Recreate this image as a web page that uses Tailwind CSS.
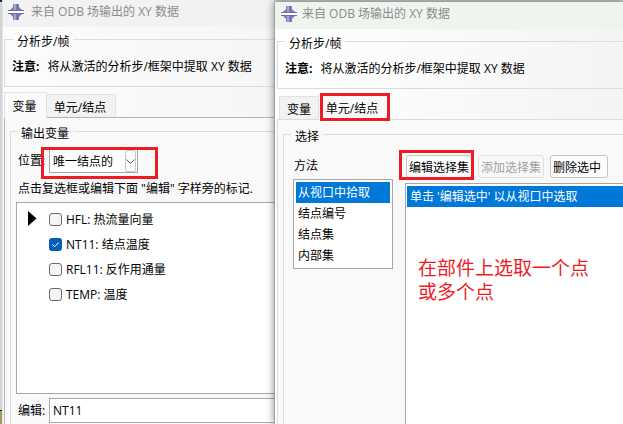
<!DOCTYPE html>
<html lang="zh-CN">

<head>
  <meta charset="UTF-8">
  <meta name="viewport" content="width=device-width, initial-scale=1.0">
  <title>来自 ODB 场输出的 XY 数据</title>
  <script src="https://cdn.jsdelivr.net/npm/@tailwindcss/browser@4"></script>
</head>

<body class="flex h-screen overflow-hidden bg-[#d4d4d6] font-['Open_Sans','Noto_Sans_CJK_SC',sans-serif] text-[12px] leading-4 text-black">

  <!-- Edge of the application behind the windows -->
  <div class="flex w-[2px] shrink-0 flex-col justify-between">
    <span class="h-[2px] bg-[#0d3d12]"></span>
    <span class="h-[14px] border-t border-[#222] bg-[#a39a62]"></span>
  </div>

  <!-- Left window: variables tab -->
  <section class="flex w-[272px] shrink-0 flex-col border-l border-[#e4e4e4] bg-linear-to-r from-[#fcfcfc] to-[#f6f6f6]">
    <header class="flex h-[27px] shrink-0 items-center gap-[7px] bg-[#f2f2f2] pb-[3px] pl-[5px] text-[#8c8c8c]">
      <svg class="size-4 shrink-0" viewBox="0 0 16 16">
        <path d="M5 0h6v3l4 4H1l4-4zM1 9h14l-4 4v3H5v-3L1 9z" fill="#8080b4" />
        <path d="M6 0h2v7H6zM6 9h2v7H6z" fill="#a4a4cc" />
        <path d="M9 0h1v7H9zM9 9h1v7H9z" fill="#6a6aa4" />
        <path d="M0 6h16v1H0zM0 9h16v1H0z" fill="#6c6ca8" />
        <path d="M0 7h16v2H0z" fill="#fff" />
      </svg>
      <h1>来自 ODB 场输出的 XY 数据</h1>
    </header>

    <fieldset class="ml-px mt-px border border-r-0 border-[#dcdcdc] pb-[11px] pl-[7px] pt-[9px]">
      <legend class="ml-px px-1 pt-[6px]">分析步/帧</legend>
      <p class="whitespace-nowrap"><b class="mr-2">注意:</b>将从激活的分析步/框架中提取 XY 数据</p>
    </fieldset>

    <div class="ml-px mt-[5px] flex items-end">
      <button class="h-[26px] w-[43px] border border-b-0 border-[#e2e2e2] bg-[#fafafa] pr-[2px] pt-[3px]">变量</button>
      <div class="flex h-6 flex-1 border-b border-[#b4b4c0]">
        <button class="w-[69px] border border-b-0 border-l-0 border-[#e2e2e2] bg-[#f2f2f2] pr-[2px] pt-[3px]">单元/结点</button>
      </div>
    </div>

    <div class="ml-px flex flex-1 flex-col border-l border-[#b4b4b8] bg-[#f9f9f9] pl-[5px] pt-[2px]">
      <fieldset class="flex flex-1 flex-col border border-b-0 border-r-0 border-[#dcdcdc] pb-px pl-[5px]">
        <legend class="ml-px px-1 pt-[6px]">输出变量</legend>
        <div class="mt-[7px] flex items-center pl-[2px]">
          <label for="position" class="w-[31px]">位置:</label>
          <div class="relative">
            <select id="position" class="h-6 w-[89px] appearance-none border border-[#a6a6ac] bg-white pl-[3px] pt-px">
              <option>唯一结点的</option>
            </select>
            <span class="pointer-events-none absolute inset-y-px right-[2px] flex w-[11px] items-center justify-center rounded-xs border border-[#c8c8c8] bg-[#fbfbfb]">
              <svg class="h-[5px] w-[9px] shrink-0" viewBox="0 0 9 5"><path d="M.5.5l4 4 4-4" fill="none" stroke="#555" /></svg>
            </span>
            <span class="pointer-events-none absolute -bottom-[6px] -left-2 -right-5 -top-[2px] border-3 border-[#ed1c24]"></span>
          </div>
        </div>
        <p class="mt-2 whitespace-nowrap pl-[2px]">点击复选框或编辑下面 "编辑" 字样旁的标记.</p>

        <div class="mt-[5px] flex flex-1 gap-3 border border-r-0 border-[#a6a6ac] bg-white pl-[11px] pt-1">
          <svg class="mt-1 h-[15px] w-[9px]" viewBox="0 0 9 15"><path d="M0 0l8.5 7.5L0 15z" /></svg>
          <ul>
            <li><label class="flex h-[25px] items-center gap-1"><input type="checkbox" class="size-[13px] appearance-none rounded-[3px] border border-[#6b6b6b] bg-[#f5f5f5]">HFL: 热流量向量</label></li>
            <li><label class="flex h-[25px] items-center gap-1">
                <span class="relative flex">
                  <input type="checkbox" checked class="size-[13px] appearance-none rounded-[3px] bg-[#005fb8]">
                  <svg class="pointer-events-none absolute inset-0 size-[13px]" viewBox="0 0 13 13"><path d="M3.5 6.5l2.2 2.2L9.7 4.5" fill="none" stroke="#fff" /></svg>
                </span>NT11: 结点温度</label></li>
            <li><label class="flex h-[25px] items-center gap-1"><input type="checkbox" class="size-[13px] appearance-none rounded-[3px] border border-[#6b6b6b] bg-[#f5f5f5]">RFL11: 反作用通量</label></li>
            <li><label class="flex h-[25px] items-center gap-1"><input type="checkbox" class="size-[13px] appearance-none rounded-[3px] border border-[#6b6b6b] bg-[#f5f5f5]">TEMP: 温度</label></li>
          </ul>
        </div>

        <div class="mt-1 flex items-center pl-[2px]">
          <label for="edit" class="w-[31px] shrink-0">编辑:</label>
          <input id="edit" value="NT11" class="h-[25px] min-w-0 flex-1 border border-r-0 border-[#a6a6ac] bg-white px-[3px]">
        </div>
      </fieldset>
    </div>
  </section>

  <!-- Right window: element/node tab -->
  <section class="relative ml-px mt-[2px] flex min-w-0 flex-1 flex-col bg-linear-to-r from-white to-[#f4f4f4] shadow-[0_0_8px_1px_rgba(0,0,0,0.45)]">
    <header class="flex h-[27px] shrink-0 items-center gap-[5px] bg-[#eff4ee] pb-[3px] pl-[6px] text-[#8c8c8c]">
      <svg class="size-4 shrink-0" viewBox="0 0 16 16">
        <path d="M5 0h6v3l4 4H1l4-4zM1 9h14l-4 4v3H5v-3L1 9z" fill="#8080b4" />
        <path d="M6 0h2v7H6zM6 9h2v7H6z" fill="#a4a4cc" />
        <path d="M9 0h1v7H9zM9 9h1v7H9z" fill="#6a6aa4" />
        <path d="M0 6h16v1H0zM0 9h16v1H0z" fill="#6c6ca8" />
        <path d="M0 7h16v2H0z" fill="#fff" />
      </svg>
      <h1>来自 ODB 场输出的 XY 数据</h1>
    </header>

    <fieldset class="ml-[2px] mt-px border border-r-0 border-[#dcdcdc] pb-[11px] pl-[7px] pt-[9px]">
      <legend class="px-1 pt-[6px]">分析步/帧</legend>
      <p class="whitespace-nowrap"><b class="mr-2">注意:</b>将从激活的分析步/框架中提取 XY 数据</p>
    </fieldset>

    <div class="ml-[2px] mt-[5px] flex items-end">
      <div class="flex h-6 border-b border-[#dcdcdc] pl-[2px]">
        <button class="w-[39px] border border-b-0 border-r-0 border-[#e2e2e2] bg-[#f2f2f2] pt-[3px]">变量</button>
      </div>
      <button class="relative h-[26px] w-[71px] border border-b-0 border-[#e2e2e2] bg-[#fafafa] pr-[3px] pt-[3px]">
        单元/结点
        <span class="pointer-events-none absolute -bottom-px -right-[2px] -top-[2px] left-px border-3 border-[#ed1c24]"></span>
      </button>
      <div class="h-px flex-1 bg-[#dcdcdc]"></div>
    </div>

    <div class="ml-[2px] flex flex-1 flex-col border-l border-[#dcdcdc] bg-[#f9f9f9] pl-[5px] pt-[3px]">
      <fieldset class="flex flex-1 gap-3 border border-b-0 border-r-0 border-[#dcdcdc] pl-[9px]">
        <legend class="-ml-[2px] px-1 pt-[6px]">选择</legend>
        <div class="w-[100px] shrink-0 pt-[13px]">
          <h2 class="pl-px">方法</h2>
          <ul class="mt-[5px] border border-[#a6a6ac] bg-white p-[2px] leading-[21px]">
            <li><button class="block w-full bg-[#0078d7] pl-[2px] text-left text-white">从视口中拾取</button></li>
            <li><button class="block w-full pl-[2px] text-left">结点编号</button></li>
            <li><button class="block w-full pl-[2px] text-left">结点集</button></li>
            <li><button class="block w-full pl-[2px] text-left">内部集</button></li>
          </ul>
        </div>

        <div class="flex min-w-0 flex-1 flex-col">
          <div class="mt-[10px] flex gap-[6px] pl-px">
            <button class="relative h-[23px] w-[66px] whitespace-nowrap rounded-[3px] border border-[#c4c4c4] bg-[#fdfdfd] pt-[2px]">
              编辑选择集
              <span class="pointer-events-none absolute -bottom-[3px] -left-2 -right-[3px] -top-[6px] border-3 border-[#ed1c24]"></span>
            </button>
            <button disabled class="h-[23px] w-[66px] whitespace-nowrap rounded-[3px] border border-[#e0e0e0] bg-[#f8f8f8] pt-[2px] text-[#a2a2a2]">添加选择集</button>
            <button class="h-[23px] w-[58px] whitespace-nowrap rounded-[3px] border border-[#c4c4c4] bg-[#fdfdfd] pr-1 pt-[2px]">删除选中</button>
          </div>
          <div class="mt-[5px] flex-1 border border-b-0 border-r-0 border-[#a6a6ac] bg-white pl-px pt-[2px]">
            <p class="bg-[#0078d7] pl-[3px] leading-[21px] text-white">单击 '编辑选中' 以从视口中选取</p>
            <p class="mt-[49px] pl-[11px] text-[19px] leading-[24px] text-[#ed1c24]">在部件上选取一个点<br>或多个点</p>
          </div>
        </div>
      </fieldset>
    </div>
  </section>
</body>

</html>
